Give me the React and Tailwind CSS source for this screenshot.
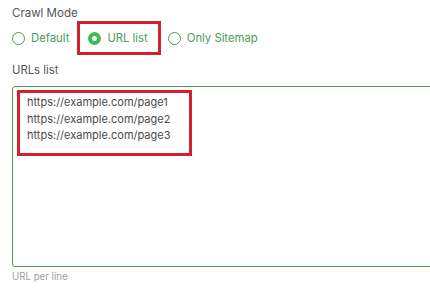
export default function App() {
  return (
    <div className="w-[430px] h-[290px] overflow-hidden bg-white pl-3 font-['Inter',sans-serif]">
      <div className="pt-[6px] text-[11.5px] leading-[15px] text-[#555]">Crawl Mode</div>
      <div className="flex items-center h-[34px] text-[11.3px] text-[#4a9d57]">
        <span className="w-[13px] h-[13px] rounded-full border border-[#4a9d57]" />
        <span className="ml-[6px]">Default</span>
        <div className="ml-[8px] h-[34px] flex items-center border-[3px] border-[#d3202e] pl-[8px] pr-[10px]">
          <span className="w-[13px] h-[13px] rounded-full bg-[#3dbb55] flex items-center justify-center">
            <span className="w-[5px] h-[5px] rounded-full bg-white" />
          </span>
          <span className="ml-[6px]">URL list</span>
        </div>
        <span className="ml-[7px] w-[13px] h-[13px] rounded-full border border-[#4a9d57]" />
        <span className="ml-[6px]">Only Sitemap</span>
      </div>
      <div className="mt-[7px] text-[11.3px] leading-4 text-[#555]">URLs list</div>
      <div className="mt-[8px] w-[440px] h-[181px] rounded-[3px] border border-[#4a9d57] pt-[3px] pl-[4px]">
        <div className="w-[175px] h-[66px] border-[3px] border-[#d3202e] pl-[7px] pt-[1px] text-[11px] leading-[16.5px] text-[#4a4a4a]">
          <div>https://example.com/page1</div>
          <div>https://example.com/page2</div>
          <div>https://example.com/page3</div>
        </div>
      </div>
      <div className="mt-[3px] text-[9.7px] leading-[14px] text-[#a0a0a0]">URL per line</div>
    </div>
  );
}
